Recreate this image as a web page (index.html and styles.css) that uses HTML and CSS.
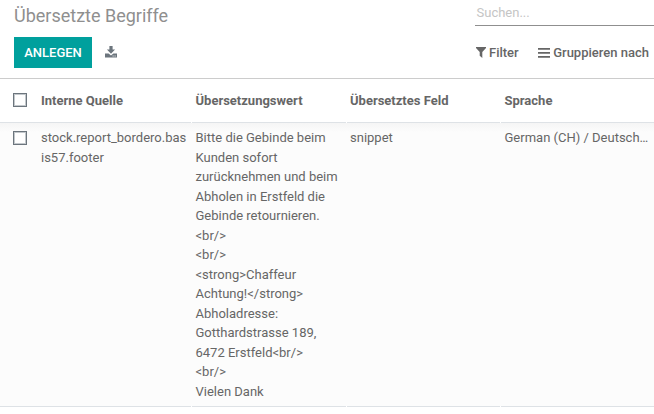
FILE: index.html
```html
<!DOCTYPE html>
<html lang="de">
<head>
<meta charset="utf-8">
<title>Übersetzte Begriffe</title>
<link rel="stylesheet" href="styles.css">
</head>
<body>
<header class="control-panel">
  <div class="left">
    <h1 class="title">Übersetzte Begriffe</h1>
    <div class="actions">
      <button class="create">ANLEGEN</button>
      <button class="export" aria-label="Export">
        <svg width="12" height="12" viewBox="0 0 12 12"><path fill="currentColor" d="M4.400 0h3.200v3.600h2.500L6 7.700 1.900 3.600h2.500zM0 7.600h3.600L6 9.600l2.400-2H12V11.400H0z"/><path fill="#fff" d="M7.600 9.500h1v1h-1zM9.600 9.500h1v1h-1z"/></svg>
      </button>
    </div>
  </div>
  <div class="right">
    <div class="search">Suchen...</div>
    <div class="filters">
      <span class="filter"><svg width="10" height="11" viewBox="0 0 10 11"><path fill="currentColor" d="M0 0h10v1L6.300 5v6L3.700 8.700V5L0 1z"/></svg>Filter</span>
      <span class="filter group"><svg width="12" height="10" viewBox="0 0 12 10"><path fill="currentColor" d="M0 0h12v1.700H0zM0 4h12v1.700H0zM0 8h12v1.700H0z"/></svg>Gruppieren nach</span>
    </div>
  </div>
</header>
<main class="list">
  <div class="row head">
    <div class="check"><span class="box"></span></div>
    <div class="cell">Interne Quelle</div>
    <div class="cell">Übersetzungswert</div>
    <div class="cell">Übersetztes Feld</div>
    <div class="cell">Sprache</div>
  </div>
  <div class="row record">
    <div class="check"><span class="box"></span></div>
    <div class="cell source">stock.report_bordero.basis57.footer</div>
    <div class="cell value">Bitte die Gebinde beim
Kunden sofort
zurücknehmen und beim
Abholen in Erstfeld die
Gebinde retournieren.
&lt;br/&gt;
&lt;br/&gt;
&lt;strong&gt;Chaffeur
Achtung!&lt;/strong&gt;
Abholadresse:
Gotthardstrasse 189,
6472 Erstfeld&lt;br/&gt;
&lt;br/&gt;
Vielen Dank</div>
    <div class="cell">snippet</div>
    <div class="cell language">German (CH) / Deutsch…</div>
  </div>
</main>
</body>
</html>
```
FILE: styles.css
```css
* { box-sizing: border-box; }

body {
  margin: 0;
  overflow: hidden;
  background: #fff;
  color: #666;
  font: 13px/19.5px Roboto, sans-serif;
}

.control-panel {
  display: flex;
  justify-content: space-between;
  height: 79px;
  padding-left: 14px;
  border-bottom: 1px solid #ccc;
}

.title {
  margin: 2px 0 8px;
  color: #8f8f8f;
  font-size: 18px;
  font-weight: 400;
  line-height: 27px;
}

.actions { display: flex; align-items: center; }

.create {
  width: 78px;
  height: 31px;
  padding: 0;
  border: 0;
  background: #00a09d;
  color: #fff;
  font: 500 13px/19.5px Roboto, sans-serif;
}

.export {
  display: flex;
  margin: 0 0 2px 13px;
  padding: 0;
  border: 0;
  background: none;
  color: #6c757d;
}

.right { width: 179px; }

.search {
  height: 26px;
  padding: 3px 1.5px 0;
  border-bottom: 1px solid #8f8f8f;
  color: #c5c5c5;
}

.filters {
  display: flex;
  gap: 19px;
  padding: 17px 0 0 1px;
  font-weight: 500;
  white-space: nowrap;
}

.filter { display: flex; align-items: center; gap: 3px; }

.group { gap: 3.5px; }

.row {
  display: grid;
  grid-template-columns: 36.5px repeat(4, 154.5px);
}

.row > * { border-bottom: 1px solid #dee2e6; }

.cell { padding: 5px 4.5px; }

.cell + .cell {
  border-image: linear-gradient(to right, #fff 1px, #dee2e6 1px) 0 0 1 0;
}

.check { padding: 8px 0 0 13px; }

.box {
  display: block;
  width: 14px;
  height: 14px;
  border: 1px solid #6c757d;
  box-shadow: inset 0 0 0 1px #c3c8cc;
  background: #fff;
}

.head { height: 44px; font-weight: 700; }
.head .cell { padding-top: 12px; }
.head .check { padding-top: 14px; }

.record {
  background: linear-gradient(#f5f5f5, #fcfcfc 9px);
}

.source { word-break: break-all; }

.value { white-space: pre; }

.language { white-space: nowrap; }
```
